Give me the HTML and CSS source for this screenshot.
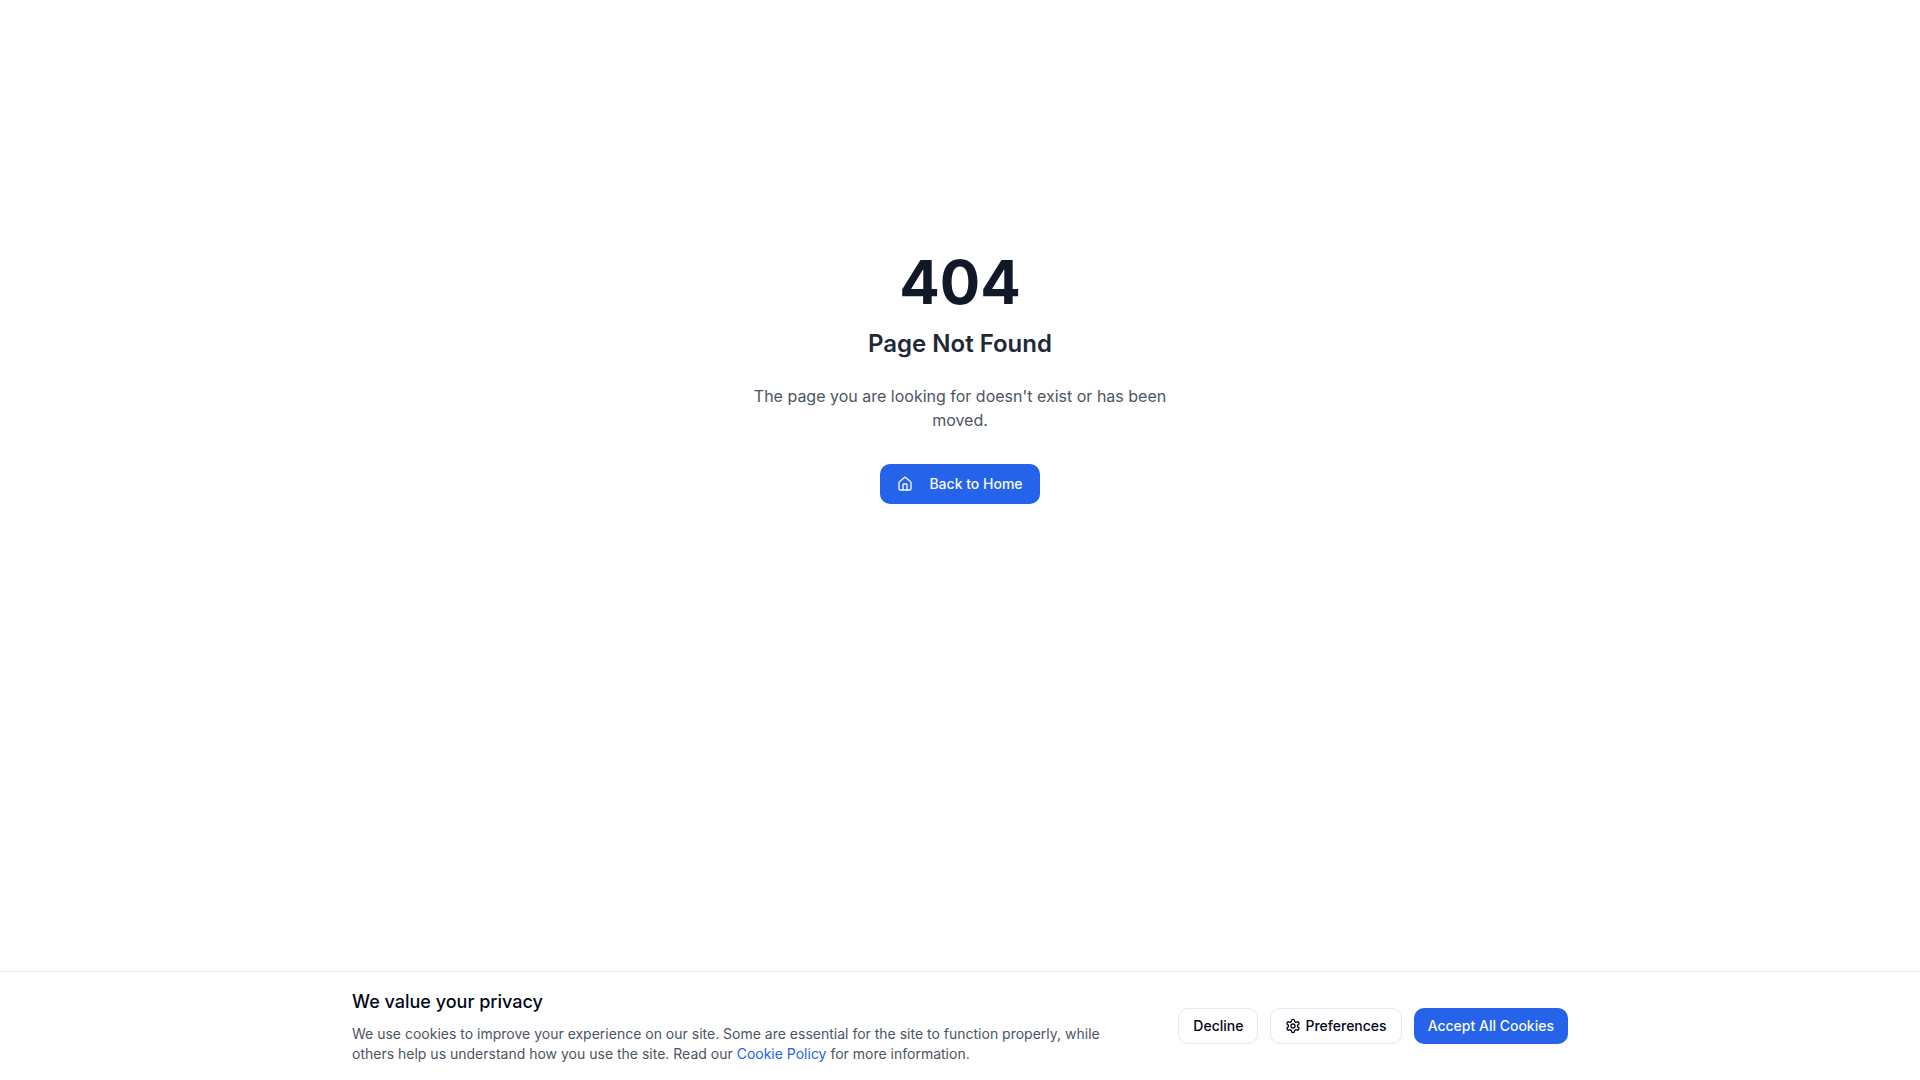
FILE: index.html
```html
<!DOCTYPE html>
<html lang="en">
<head>
    <meta charset="UTF-8">
    <meta name="viewport" content="width=device-width, initial-scale=1.0">
    <title>Page Not Found</title>
    <link rel="stylesheet" href="styles.css">
</head>
<body>
    <main class="not-found">
        <div class="not-found-content">
            <h1>404</h1>
            <h2>Page Not Found</h2>
            <p>The page you are looking for doesn't exist or has been moved.</p>
            <a class="button button-primary button-home" href="/">
                <svg class="icon" viewBox="0 0 24 24" aria-hidden="true">
                    <path d="M15 21v-8a1 1 0 0 0-1-1h-4a1 1 0 0 0-1 1v8"/>
                    <path d="M3 10a2 2 0 0 1 .709-1.528l7-5.999a2 2 0 0 1 2.582 0l7 5.999A2 2 0 0 1 21 10v9a2 2 0 0 1-2 2H5a2 2 0 0 1-2-2z"/>
                </svg>
                Back to Home
            </a>
        </div>
    </main>

    <section class="cookie-banner" aria-labelledby="cookie-title">
        <div class="cookie-inner">
            <div class="cookie-text">
                <h3 id="cookie-title">We value your privacy</h3>
                <p>We use cookies to improve your experience on our site. Some are essential for the site to function properly, while others help us understand how you use the site. Read our <a href="/cookie-policy">Cookie Policy</a> for more information.</p>
            </div>
            <div class="cookie-actions">
                <button class="button button-outline" type="button">Decline</button>
                <button class="button button-outline" type="button">
                    <svg class="icon" viewBox="0 0 24 24" aria-hidden="true">
                        <path d="M12.22 2h-.44a2 2 0 0 0-2 2v.18a2 2 0 0 1-1 1.73l-.43.25a2 2 0 0 1-2 0l-.15-.08a2 2 0 0 0-2.73.73l-.22.38a2 2 0 0 0 .73 2.73l.15.1a2 2 0 0 1 1 1.72v.51a2 2 0 0 1-1 1.74l-.15.09a2 2 0 0 0-.73 2.73l.22.38a2 2 0 0 0 2.73.73l.15-.08a2 2 0 0 1 2 0l.43.25a2 2 0 0 1 1 1.73V20a2 2 0 0 0 2 2h.44a2 2 0 0 0 2-2v-.18a2 2 0 0 1 1-1.73l.43-.25a2 2 0 0 1 2 0l.15.08a2 2 0 0 0 2.73-.73l.22-.39a2 2 0 0 0-.73-2.73l-.15-.08a2 2 0 0 1-1-1.74v-.5a2 2 0 0 1 1-1.74l.15-.09a2 2 0 0 0 .73-2.73l-.22-.38a2 2 0 0 0-2.73-.73l-.15.08a2 2 0 0 1-2 0l-.43-.25a2 2 0 0 1-1-1.73V4a2 2 0 0 0-2-2z"/>
                        <circle cx="12" cy="12" r="3"/>
                    </svg>
                    Preferences
                </button>
                <button class="button button-primary" type="button">Accept All Cookies</button>
            </div>
        </div>
    </section>
</body>
</html>
```
FILE: styles.css
```css
* {
    box-sizing: border-box;
}
body {
    margin: 0;
    font-family: Inter, sans-serif;
    font-size: 16px;
    line-height: 24px;
    color: #020817;
    background-color: #fff;
}
h1, h2, h3, p {
    margin: 0;
}
.not-found {
    display: flex;
    align-items: center;
    justify-content: center;
    min-height: 70vh;
    padding: 0 16px;
}
.not-found-content {
    max-width: 448px;
    text-align: center;
}
.not-found h1 {
    margin-bottom: 16px;
    font-size: 60px;
    line-height: 60px;
    font-weight: 700;
    color: #111827;
}
.not-found h2 {
    margin-bottom: 24px;
    font-size: 24px;
    line-height: 32px;
    font-weight: 600;
    color: #1f2937;
}
.not-found p {
    margin-bottom: 32px;
    color: #4b5563;
}

/* Buttons */
.button {
    display: inline-flex;
    align-items: center;
    justify-content: center;
    gap: 4px;
    height: 36px;
    padding: 0 14px;
    border: 0;
    border-radius: 10px;
    font-family: inherit;
    font-size: 14px;
    line-height: 20px;
    font-weight: 500;
    white-space: nowrap;
    text-decoration: none;
    cursor: pointer;
}
.button-primary {
    background-color: #2563eb;
    color: #f8fafc;
}
.button-primary:hover {
    background-color: #1d4ed8;
}
.button-outline {
    border: 1px solid #e2e8f0;
    background-color: #fff;
    color: #020817;
}
.button-outline:hover {
    background-color: #f1f5f9;
}
.button-home {
    gap: 16px;
    height: 40px;
    min-width: 160px;
    vertical-align: top;
}
.icon {
    width: 16px;
    height: 16px;
    flex-shrink: 0;
    fill: none;
    stroke: currentColor;
    stroke-width: 2;
    stroke-linecap: round;
    stroke-linejoin: round;
}

/* Cookie banner */
.cookie-banner {
    position: fixed;
    left: 0;
    right: 0;
    bottom: 0;
    padding: 16px 0;
    border-top: 1px solid #e5e7eb;
    background-color: #fff;
}
.cookie-inner {
    display: flex;
    align-items: center;
    justify-content: space-between;
    gap: 48px;
    max-width: 1280px;
    margin: 0 auto;
    padding: 0 32px;
}
.cookie-text {
    flex: 1;
}
.cookie-text h3 {
    margin-bottom: 8px;
    font-size: 18px;
    line-height: 28px;
    font-weight: 500;
}
.cookie-text p {
    font-size: 14px;
    line-height: 20px;
    color: #4b5563;
}
.cookie-text a {
    color: #2563eb;
    text-decoration: none;
}
.cookie-text a:hover {
    text-decoration: underline;
}
.cookie-actions {
    display: flex;
    gap: 12px;
}
@media (max-width: 768px) {
    .cookie-inner {
        flex-direction: column;
        align-items: flex-start;
        gap: 16px;
        padding: 0 16px;
    }
    .cookie-actions {
        flex-wrap: wrap;
    }
}
```
